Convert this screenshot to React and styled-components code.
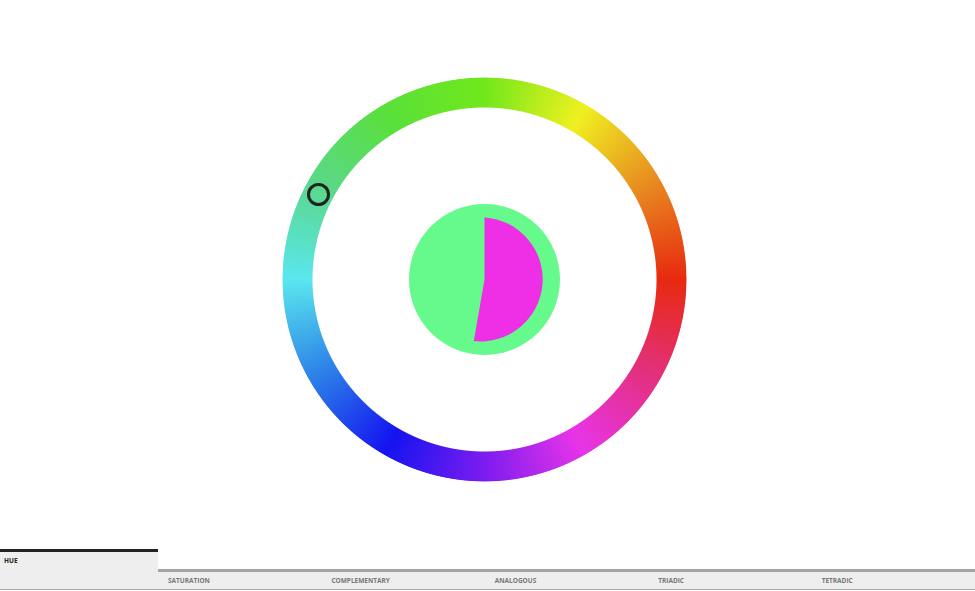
import styled, { createGlobalStyle } from "styled-components";

const GlobalStyle = createGlobalStyle`
  html, body {
    margin: 0;
    padding: 0;
    background: #fff;
    font-family: "Open Sans", "Liberation Sans", sans-serif;
  }
`;

const Page = styled.div`
  height: 100vh;
  display: flex;
  flex-direction: column;
  overflow: hidden;
`;

const Stage = styled.main`
  flex: 1;
  display: flex;
  justify-content: center;
  padding: 77px 6px 0 0;
`;

const Wheel = styled.div`
  position: relative;
  width: 405px;
  height: 405px;
  display: grid;
`;

const Ring = styled.div`
  grid-area: 1 / 1;
  border-radius: 50%;
  background: conic-gradient(
    from 90deg,
    #e8290f 0deg,
    #e3307e 30deg,
    #e834e8 60deg,
    #7c1cf0 90deg,
    #1414f0 120deg,
    #2c80e8 150deg,
    #5ae6ee 180deg,
    #5ad888 210deg,
    #5ae03a 240deg,
    #70e81a 270deg,
    #f0f020 300deg,
    #e88a20 330deg,
    #e8290f 360deg
  );
  -webkit-mask: radial-gradient(circle, transparent 171.5px, #000 172.5px, #000 201.5px, transparent 202.5px);
  mask: radial-gradient(circle, transparent 171.5px, #000 172.5px, #000 201.5px, transparent 202.5px);
`;

const Handle = styled.div`
  position: absolute;
  left: ${(p) => p.$x}px;
  top: ${(p) => p.$y}px;
  width: 17px;
  height: 17px;
  margin: -11.5px 0 0 -11.5px;
  border: 3px solid #222;
  border-radius: 50%;
`;

const Preview = styled.div`
  grid-area: 1 / 1;
  place-self: center;
  width: 151px;
  height: 151px;
  border-radius: 50%;
  background: #66fa8c;
  svg {
    display: block;
  }
`;

const TabBar = styled.nav`
  display: flex;
  align-items: flex-end;
  border-bottom: 1px solid #a8a8a8;
  margin-bottom: 1px;
`;

const Tab = styled.div`
  flex: ${(p) => (p.$active ? "0 0 158px" : "1 1 0")};
  height: ${(p) => (p.$active ? "40px" : "20px")};
  padding: ${(p) => (p.$active ? "4px 4px 0" : "4px 10px 0")};
  box-sizing: border-box;
  background: #eee;
  border-top: 3px solid ${(p) => (p.$active ? "#222" : "#a4a4a4")};
  font-size: 6.5px;
  line-height: 9px;
  font-weight: 700;
  color: ${(p) => (p.$active ? "#222" : "#777")};
  text-transform: uppercase;
  white-space: nowrap;
`;

const tabs = ["Hue", "Saturation", "Complementary", "Analogous", "Triadic", "Tetradic"];

export default function App() {
  return (
    <Page>
      <GlobalStyle />
      <Stage>
        <Wheel>
          <Ring />
          <Preview>
            <svg width="151" height="151" viewBox="0 0 151 151">
              <path d="M75.5 75.5 L75.5 13.5 A62 62 0 1 1 64.8 137 Z" fill="#ee2fe6" />
            </svg>
          </Preview>
          <Handle $x={36.8} $y={117.7} />
        </Wheel>
      </Stage>
      <TabBar>
        {tabs.map((t, i) => (
          <Tab key={t} $active={i === 0}>
            {t}
          </Tab>
        ))}
      </TabBar>
    </Page>
  );
}
